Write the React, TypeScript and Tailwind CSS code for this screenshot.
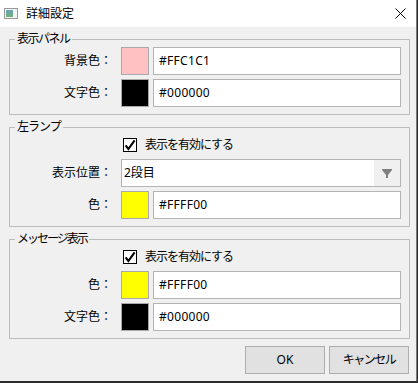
import React from "react";

function Swatch({ color }: { color: string }) {
  return <div className="w-[28px] h-[28px] border border-[#a9a9a9]" style={{ backgroundColor: color }} />;
}

function TextBox({ value }: { value: string }) {
  return (
    <div className="w-[248px] h-[28px] bg-white border border-[#b4b4b4] flex items-center pl-[5px] text-[12px] tracking-[0.3px] text-black">
      {value}
    </div>
  );
}

function Row({ label, children }: { label: string; children: React.ReactNode }) {
  return (
    <div className="flex items-center h-[28px]">
      <div className="w-[102px] text-right text-[12px] leading-[16px]">{label}</div>
      <div className="ml-[9px] flex items-center gap-[4px]">{children}</div>
    </div>
  );
}

function CheckRow({ label }: { label: string }) {
  return (
    <div className="flex items-center h-[20px] pl-[113px]">
      <div className="w-[14px] h-[14px] border border-black bg-white flex items-center justify-center">
        <svg width="12" height="12" viewBox="0 0 12 12">
          <path d="M1.6 6.4 L4.4 10 L10.6 1.4" fill="none" stroke="#000" strokeWidth="2.1" />
        </svg>
      </div>
      <span className="ml-[8px] text-[12px] leading-[16px] tracking-[-1px]">{label}</span>
    </div>
  );
}

function Group({ title, tracking, children }: { title: string; tracking: string; children: React.ReactNode }) {
  return (
    <fieldset className="ml-[9px] mt-[4px] w-[401px] border border-[#bcbcbc] pb-[7px]">
      <legend className={"ml-[5px] px-[2px] text-[12px] leading-[16px] " + tracking}>{title}</legend>
      <div className="flex flex-col gap-[4px]">{children}</div>
    </fieldset>
  );
}

export default function App() {
  return (
    <div className="w-[418px] h-[383px] bg-[#2b2b2b] font-['Noto_Sans','Noto_Sans_CJK_JP',sans-serif] text-black">
      <div className="w-[417px] h-[381px] bg-[#f0f0f0] border-r border-[#7a7a7a] flex flex-col">
        <div className="h-[27px] bg-white flex items-center pl-[4px] pr-[10px]">
          <svg width="14" height="11" viewBox="0 0 14 11">
            <defs>
              <linearGradient id="g" x1="0" y1="0" x2="0" y2="1">
                <stop offset="0" stopColor="#6aa6b8" />
                <stop offset="1" stopColor="#6fb07a" />
              </linearGradient>
            </defs>
            <rect x="0.5" y="0.5" width="13" height="10" fill="#f4f4f4" stroke="#9a9a9a" />
            <rect x="2" y="2" width="7" height="7" fill="url(#g)" />
          </svg>
          <span className="ml-[8px] text-[12px] leading-[16px]">詳細設定</span>
          <div className="flex-1" />
          <svg width="11" height="11" viewBox="0 0 11 11">
            <path d="M0.5 0.5 L10.5 10.5 M10.5 0.5 L0.5 10.5" stroke="#000" strokeWidth="1" />
          </svg>
        </div>

        <Group title="表示パネル" tracking="tracking-[-1.5px]">
          <Row label="背景色：">
            <Swatch color="#FFC1C1" />
            <TextBox value="#FFC1C1" />
          </Row>
          <Row label="文字色：">
            <Swatch color="#000000" />
            <TextBox value="#000000" />
          </Row>
        </Group>

        <Group title="左ランプ" tracking="tracking-[-1px]">
          <CheckRow label="表示を有効にする" />
          <Row label="表示位置：">
            <div className="w-[280px] h-[28px] bg-white border border-[#b4b4b4] flex items-center">
              <span className="pl-[2px] text-[12px] leading-[16px] flex-1">2段目</span>
              <div className="w-[26px] h-full bg-[#f0f0f0] flex items-center justify-center">
                <svg width="10" height="9" viewBox="0 0 10 9">
                  <polygon points="0,0 10,0 10,1 6,6 6,9 4,9 4,6 0,1" fill="#7f7f7f" />
                </svg>
              </div>
            </div>
          </Row>
          <Row label="色：">
            <Swatch color="#FFFF00" />
            <TextBox value="#FFFF00" />
          </Row>
        </Group>

        <Group title="メッセージ表示" tracking="tracking-[-2px]">
          <CheckRow label="表示を有効にする" />
          <Row label="色：">
            <Swatch color="#FFFF00" />
            <TextBox value="#FFFF00" />
          </Row>
          <Row label="文字色：">
            <Swatch color="#000000" />
            <TextBox value="#000000" />
          </Row>
        </Group>

        <div className="flex justify-end gap-[4px] pr-[7px] mt-[7px]">
          <button className="w-[80px] h-[28px] bg-[#e1e1e1] border border-[#adadad] text-[12px] leading-[16px]">OK</button>
          <button className="w-[80px] h-[28px] bg-[#e1e1e1] border border-[#adadad] text-[12px] leading-[16px] tracking-[-1.5px]">キャンセル</button>
        </div>
      </div>
    </div>
  );
}
